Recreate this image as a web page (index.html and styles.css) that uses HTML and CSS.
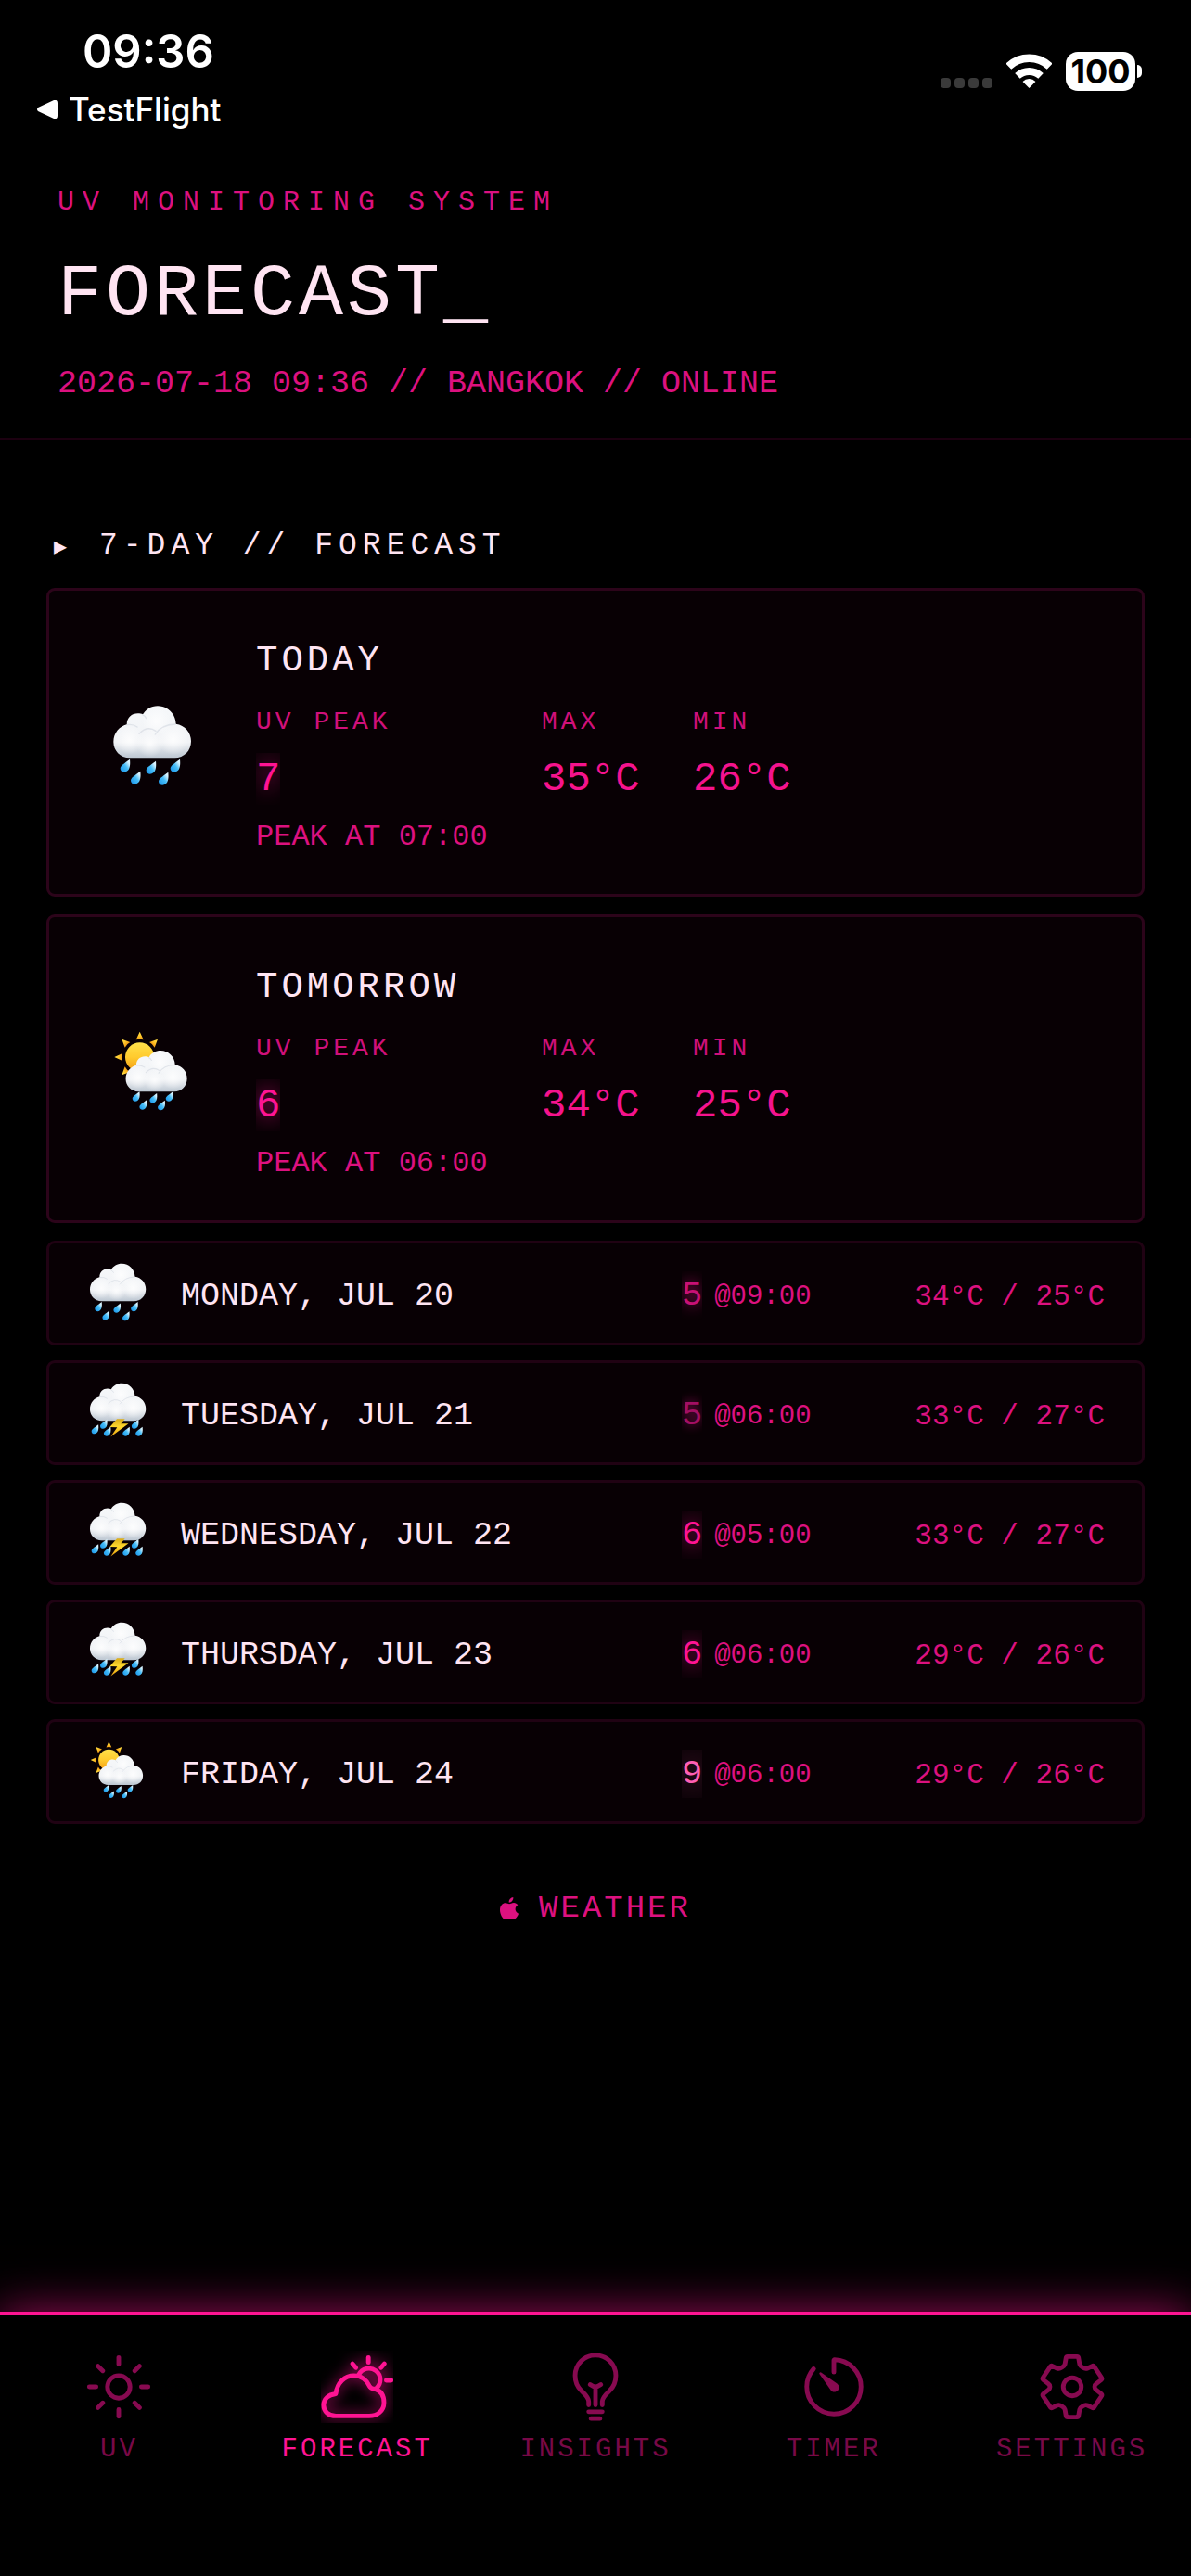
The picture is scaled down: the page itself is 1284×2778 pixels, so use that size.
FILE: index.html
```
<!DOCTYPE html>
<html lang="en">
  <head>
    <meta charset="utf-8" />
    <meta name="viewport" content="width=device-width" />
    <title>UV Forecast</title>
    <link rel="stylesheet" href="styles.css">
  </head>
  <body>
    <!-- shared weather icons -->
    <svg class="sprite" aria-hidden="true">
      <defs>
        <linearGradient id="cloud-fill" x1="0" y1="0" x2="0" y2="1">
          <stop offset="0" stop-color="#f6f8fa" />
          <stop offset="0.7" stop-color="#f1f3f6" />
          <stop offset="1" stop-color="#bcc6d1" />
        </linearGradient>
        <radialGradient id="puff-fill">
          <stop offset="0" stop-color="#fff" stop-opacity="0.8" />
          <stop offset="1" stop-color="#fff" stop-opacity="0" />
        </radialGradient>
        <linearGradient id="drop-fill" x1="1" y1="0" x2="0" y2="1">
          <stop offset="0.2" stop-color="#d9f3ff" />
          <stop offset="0.5" stop-color="#45bdf8" />
          <stop offset="1" stop-color="#1690e8" />
        </linearGradient>
        <linearGradient id="sun-fill" x1="0" y1="0" x2="0" y2="1">
          <stop offset="0" stop-color="#ffe04a" />
          <stop offset="0.5" stop-color="#ffcb2e" />
          <stop offset="1" stop-color="#f39a12" />
        </linearGradient>
        <linearGradient id="bolt-fill" x1="0" y1="0" x2="0" y2="1">
          <stop offset="0" stop-color="#d9ab18" />
          <stop offset="0.45" stop-color="#ffd92e" />
          <stop offset="1" stop-color="#e59a0c" />
        </linearGradient>
        <g id="cloud">
          <path fill="url(#cloud-fill)" d="M150 258C118 258 97 234 97 206C97 178 116 156 140 150C140 128 156 114 176 114C182 114 188 115 192 117C202 100 219 90 240 90C272 90 298 115 299 148C328 152 348 176 348 204C348 236 325 258 295 258Z" />
          <circle fill="url(#puff-fill)" cx="236" cy="140" r="46" />
          <circle fill="url(#puff-fill)" cx="148" cy="200" r="46" />
          <circle fill="url(#puff-fill)" cx="290" cy="198" r="50" />
          <circle fill="url(#puff-fill)" cx="215" cy="212" r="44" />
          <g fill="none" stroke="#cbd2dc" stroke-width="4" stroke-opacity="0.5" stroke-linecap="round">
            <path d="M192 119Q200 122 203 130" />
            <path d="M141 151Q160 148 174 158" />
            <path d="M180 180Q206 152 234 171" />
            <path d="M232 182Q252 150 298 149" />
          </g>
        </g>
        <path id="drop" fill="url(#drop-fill)" d="M18 -28C20 -10 18 4 10 10C2 17 -12 15 -13 3C-13 -8 -2 -12 18 -28Z" />
        <path id="ray" fill="url(#sun-fill)" d="M182 66L194 92Q182 88 170 92Z" />
      </defs>
      <symbol id="rain" viewBox="72 74 300 300">
        <use href="#cloud" />
        <use href="#drop" transform="translate(132 290)" />
        <use href="#drop" transform="translate(166 329)" />
        <use href="#drop" transform="translate(216 296)" />
        <use href="#drop" transform="translate(256 332)" />
        <use href="#drop" transform="translate(294 290)" />
      </symbol>
      <symbol id="sun-rain" viewBox="72 52 300 300">
        <circle fill="url(#sun-fill)" cx="182" cy="148" r="47" />
        <use href="#ray" />
        <use href="#ray" transform="rotate(45 182 148)" />
        <use href="#ray" transform="rotate(-45 182 148)" />
        <use href="#ray" transform="rotate(-90 182 148)" />
        <use href="#ray" transform="rotate(-135 182 148)" />
        <use href="#cloud" transform="translate(60 56) scale(0.79)" />
        <use href="#drop" transform="translate(168 281) scale(0.75)" />
        <use href="#drop" transform="translate(191 308) scale(0.75)" />
        <use href="#drop" transform="translate(224 286) scale(0.75)" />
        <use href="#drop" transform="translate(250 309) scale(0.75)" />
        <use href="#drop" transform="translate(276 281) scale(0.75)" />
      </symbol>
      <symbol id="storm" viewBox="72 74 300 300">
        <use href="#cloud" />
        <use href="#drop" transform="translate(117 303)" />
        <use href="#drop" transform="translate(156 280)" />
        <use href="#drop" transform="translate(172 313)" />
        <use href="#drop" transform="translate(257 313)" />
        <use href="#drop" transform="translate(297 280)" />
        <use href="#drop" transform="translate(315 313)" />
        <path fill="url(#bolt-fill)" d="M218 250L186 286L219 288L190 330L270 271L236 271L254 250Z" />
      </symbol>
    </svg>

    <div class="status-bar">
      <div class="status-left">
        <time class="clock">09:36</time>
        <a class="back-link" href="#">
          <svg class="back-arrow" viewBox="0 0 22 20" aria-hidden="true">
            <path d="M1 8Q-1 10 1 12L18 20Q22 21 22 17V3Q22 -1 18 0Z" />
          </svg>
          TestFlight
        </a>
      </div>
      <div class="status-right">
        <div class="signal"><i></i><i></i><i></i><i></i></div>
        <svg class="wifi" viewBox="0 0 148 111" aria-label="Wi-Fi">
          <path d="M7 41A97 97 0 0 1 141 41" stroke-width="26" />
          <path d="M36 72A55 55 0 0 1 112 72" stroke-width="24" />
          <path class="wifi-dot" d="M74 111L53 90A29 29 0 0 1 95 90Z" />
        </svg>
        <div class="battery"><span class="battery-level">100</span><i class="battery-cap"></i></div>
      </div>
    </div>

    <header class="header">
      <p class="eyebrow">UV MONITORING SYSTEM</p>
      <h1 class="title">FORECAST_</h1>
      <p class="meta">2026-07-18 09:36 // BANGKOK // ONLINE</p>
    </header>

    <main class="content">
      <h2 class="section-title"><span class="marker">▸</span>7-DAY // FORECAST</h2>

      <section class="card">
        <svg class="icon-large" role="img" aria-label="Rain"><use href="#rain" /></svg>
        <div class="card-body">
          <h3 class="card-title">TODAY</h3>
          <div class="stats">
            <span class="label">UV PEAK</span>
            <span class="label">MAX</span>
            <span class="label">MIN</span>
            <span class="value"><b class="uv high">7</b></span>
            <span class="value">35°C</span>
            <span class="value">26°C</span>
          </div>
          <p class="peak">PEAK AT 07:00</p>
        </div>
      </section>

      <section class="card">
        <svg class="icon-large" role="img" aria-label="Sun and rain"><use href="#sun-rain" /></svg>
        <div class="card-body">
          <h3 class="card-title">TOMORROW</h3>
          <div class="stats">
            <span class="label">UV PEAK</span>
            <span class="label">MAX</span>
            <span class="label">MIN</span>
            <span class="value"><b class="uv high">6</b></span>
            <span class="value">34°C</span>
            <span class="value">25°C</span>
          </div>
          <p class="peak">PEAK AT 06:00</p>
        </div>
      </section>

      <ul class="days">
        <li class="day">
          <svg class="icon-small" role="img" aria-label="Rain"><use href="#rain" /></svg>
          <span class="day-name">MONDAY, JUL 20</span>
          <div class="day-data">
            <span class="day-uv"><b class="uv medium">5</b><span class="at">@09:00</span></span>
            <span class="temps">34°C / 25°C</span>
          </div>
        </li>
        <li class="day">
          <svg class="icon-small" role="img" aria-label="Thunderstorm"><use href="#storm" /></svg>
          <span class="day-name">TUESDAY, JUL 21</span>
          <div class="day-data">
            <span class="day-uv"><b class="uv low">5</b><span class="at">@06:00</span></span>
            <span class="temps">33°C / 27°C</span>
          </div>
        </li>
        <li class="day">
          <svg class="icon-small" role="img" aria-label="Thunderstorm"><use href="#storm" /></svg>
          <span class="day-name">WEDNESDAY, JUL 22</span>
          <div class="day-data">
            <span class="day-uv"><b class="uv high">6</b><span class="at">@05:00</span></span>
            <span class="temps">33°C / 27°C</span>
          </div>
        </li>
        <li class="day">
          <svg class="icon-small" role="img" aria-label="Thunderstorm"><use href="#storm" /></svg>
          <span class="day-name">THURSDAY, JUL 23</span>
          <div class="day-data">
            <span class="day-uv"><b class="uv high">6</b><span class="at">@06:00</span></span>
            <span class="temps">29°C / 26°C</span>
          </div>
        </li>
        <li class="day">
          <svg class="icon-small" role="img" aria-label="Sun and rain"><use href="#sun-rain" /></svg>
          <span class="day-name">FRIDAY, JUL 24</span>
          <div class="day-data">
            <span class="day-uv"><b class="uv extreme">9</b><span class="at">@06:00</span></span>
            <span class="temps">29°C / 26°C</span>
          </div>
        </li>
      </ul>

      <a class="attribution" href="#">
        <svg class="apple" viewBox="0 0 60 72" aria-hidden="true">
          <path d="M43 0C44 9 37 17 29 17C28 8 35 1 43 0Z" />
          <path d="M30 22C34 22 38 18 45 18C50 18 55 21 58 25C46 32 48 48 60 53C57 62 50 72 44 72C39 72 37 69 31 69C25 69 22 72 18 72C9 72 0 55 0 41C0 27 9 19 18 19C23 19 27 22 30 22Z" />
        </svg>
        WEATHER
      </a>
    </main>

    <nav class="tabs">
      <a class="tab" href="#">
        <svg class="tab-icon" viewBox="0 0 512 512" aria-hidden="true">
          <path d="M256 48V96M256 416V464M403 109L369 143M143 369L109 403M464 256H416M96 256H48M403 403L369 369M143 143L109 109" />
          <circle cx="256" cy="256" r="80" />
        </svg>
        UV
      </a>
      <a class="tab active" href="#" aria-current="page">
        <svg class="tab-icon" viewBox="0 0 512 512" aria-hidden="true">
          <g class="glow">
            <path d="M341 462H106C54 462 19 430 19 385C19 342 52 312 105 305C115 225 168 177 234 177C286 177 325 208 343 250C350 268 366 270 384 272C425 285 446 322 446 368C446 425 400 462 341 462Z" />
            <path d="M268 170A80 80 0 1 1 392 266" />
            <path d="M336 48V83M223 92L247 120M449 92L425 120M462 210H497" />
          </g>
        </svg>
        FORECAST
      </a>
      <a class="tab" href="#">
        <svg class="tab-icon" viewBox="0 0 512 512" aria-hidden="true">
          <path d="M304 384V360C304 331 335.540 303.570 356 284C384.840 256.430 400 219.390 400 176C400 96 336.270 32 256 32A143.600 143.600 0 0 0 112 176C112 217.840 127.810 257.390 156 284C176.350 303.210 208 330.700 208 360V384" />
          <path d="M224 480H288M208 432H304M256 384V256M294 240S272 256 256 256S218 240 218 240" />
        </svg>
        INSIGHTS
      </a>
      <a class="tab" href="#">
        <svg class="tab-icon" viewBox="0 0 512 512" aria-hidden="true">
          <path d="M112.910 128A191.850 191.850 0 0 0 64 254C62.820 360.350 149.650 447.800 256 448C362.200 448.200 448 362.170 448 256C448 151.460 364.450 66.390 260.500 64A4.360 4.360 0 0 0 256 68.370V152" />
          <path class="needle" d="M233.380 278.630L154.380 165.630A8.130 8.130 0 0 1 165.700 154.310L278.700 233.310A32.500 32.500 0 0 1 241.450 286.570A33.210 33.210 0 0 1 233.380 278.630Z" />
        </svg>
        TIMER
      </a>
      <a class="tab" href="#">
        <svg class="tab-icon" viewBox="0 0 512 512" aria-hidden="true">
          <path d="M222 42H290Q298 42 300 50L308 96Q312 110 330 119Q348 132 364 125L396 109Q405 104 411 112L464 192Q468 200 462 206L426 234Q414 242 414 256Q414 270 426 278L462 306Q468 312 464 320L411 400Q405 408 396 403L364 387Q348 380 330 393Q312 402 308 416L300 462Q298 470 290 470H222Q214 470 212 462L204 416Q200 402 182 393Q164 380 148 387L116 403Q107 408 101 400L48 320Q44 312 50 306L86 278Q98 270 98 256Q98 242 86 234L50 206Q44 200 48 192L101 112Q107 104 116 109L148 125Q164 132 182 119Q200 110 204 96L212 50Q214 42 222 42Z" />
          <circle cx="256" cy="256" r="64" />
        </svg>
        SETTINGS
      </a>
    </nav>
  </body>
</html>
```
FILE: styles.css
```
* {
  box-sizing: border-box;
}

body {
  margin: 0;
  min-height: 100vh;
  display: flex;
  flex-direction: column;
  background-color: #000;
  color: #dc117f;
  font-family: 'Liberation Mono', 'DejaVu Sans Mono', monospace;
}

h1,
h2,
h3,
p,
ul {
  margin: 0;
  padding: 0;
  font-weight: normal;
}

a {
  color: inherit;
  text-decoration: none;
}

.sprite {
  position: absolute;
  width: 0;
  height: 0;
}

/* status bar */
.status-bar {
  display: flex;
  justify-content: space-between;
  min-height: 198px;
  padding: 26px 53px 0 40px;
  color: #fff;
  font-family: Inter, sans-serif;
}

.status-left {
  display: flex;
  flex-direction: column;
  gap: 12px;
}

.clock {
  padding-left: 49px;
  font-size: 49px;
  font-weight: 600;
  line-height: 60px;
}

.back-link {
  display: flex;
  align-items: center;
  gap: 12px;
  font-size: 35px;
  font-weight: 500;
  line-height: 40px;
}

.back-arrow {
  width: 22px;
  height: 20px;
  fill: #fff;
}

.status-right {
  display: flex;
  align-items: center;
  gap: 15px;
  height: 101px;
}

.signal {
  display: flex;
  gap: 4px;
  padding-top: 26px;
}

.signal i {
  width: 11px;
  height: 11px;
  border-radius: 4px;
  background-color: #3a3a3a;
}

.wifi {
  width: 49px;
  height: 37px;
  fill: none;
  stroke: #fff;
}

.wifi-dot {
  fill: #fff;
  stroke: none;
}

.battery {
  display: flex;
  align-items: center;
  gap: 2px;
}

.battery-level {
  width: 75px;
  border-radius: 13px;
  background-color: #fff;
  color: #000;
  font-size: 36px;
  font-weight: 700;
  line-height: 42px;
  text-align: center;
}

.battery-cap {
  width: 5px;
  height: 14px;
  border-radius: 0 5px 5px 0;
  background-color: #fff;
}

/* header */
.header {
  padding: 0 62px 36px;
  border-bottom: 3px solid #1c0010;
}

.eyebrow {
  font-size: 30px;
  line-height: 40px;
  letter-spacing: 9px;
}

.title {
  margin: 28px 0 22px;
  color: #ffe4f2;
  font-size: 80px;
  line-height: 104px;
  letter-spacing: 4px;
}

.meta {
  font-size: 35px;
  line-height: 44px;
}

/* forecast */
.content {
  flex: 1;
  padding: 93px 50px 40px;
}

.section-title {
  display: flex;
  margin-bottom: 24px;
  padding-left: 8px;
  color: #ffe4f2;
  font-size: 33px;
  line-height: 42px;
  letter-spacing: 6px;
}

.marker {
  width: 49px;
  font-family: 'DejaVu Sans', sans-serif;
  font-size: 28px;
}

.card {
  display: flex;
  align-items: center;
  gap: 62px;
  margin-bottom: 19px;
  padding: 52px 61px 42px;
  border: 3px solid #2c041a;
  border-radius: 9px;
  background-color: #080004;
}

.icon-large {
  width: 100px;
  height: 100px;
}

.card-title {
  margin-bottom: 25px;
  color: #ffe4f2;
  font-size: 39px;
  line-height: 48px;
  letter-spacing: 4px;
}

.stats {
  display: grid;
  grid-template-columns: 308px 163px auto;
  row-gap: 16px;
}

.label {
  color: #d0107a;
  font-size: 28px;
  line-height: 34px;
  letter-spacing: 4px;
}

.value {
  color: #f5138d;
  font-size: 44px;
  line-height: 56px;
}

.peak {
  margin-top: 16px;
  font-size: 32px;
  line-height: 38px;
}

/* the glow stays inside the digit's own box */
.uv {
  display: block;
  width: max-content;
  overflow: hidden;
  font-weight: normal;
}

.uv.low {
  color: #a30f64;
  text-shadow: 0 0 12px #a30f64;
}

.uv.medium {
  color: #c81176;
  text-shadow: 0 0 16px #c81176;
}

.uv.high {
  color: #ff1493;
  text-shadow: 0 0 24px #ff1493;
}

.uv.extreme {
  color: #ff5fb4;
  text-shadow: 0 0 36px #ff5fb4;
}

.days {
  display: flex;
  flex-direction: column;
  gap: 16px;
  list-style: none;
}

.day {
  display: grid;
  grid-template-columns: 72px 1fr 456px;
  column-gap: 32px;
  align-items: center;
  min-height: 113px;
  padding: 0 40px 0 38px;
  border: 3px solid #200213;
  border-radius: 9px;
  background-color: #080004;
}

.icon-small {
  width: 72px;
  height: 72px;
}

.day-name {
  padding-top: 6px;
  color: #ffe4f2;
  font-size: 35px;
}

.day-data {
  display: flex;
  justify-content: space-between;
  align-items: baseline;
  padding-top: 4px;
}

.day-uv {
  display: flex;
  align-items: center;
  gap: 13px;
  font-size: 37px;
  line-height: 52px;
}

.at {
  padding-top: 4px;
  font-size: 29px;
}

.temps {
  font-size: 31px;
}

.attribution {
  display: flex;
  justify-content: center;
  align-items: center;
  gap: 22px;
  margin-top: 71px;
  font-size: 34px;
  line-height: 40px;
  letter-spacing: 3px;
}

.apple {
  width: 20px;
  height: 24px;
  fill: #dc117f;
}

/* tab bar */
.tabs {
  display: grid;
  grid-template-columns: repeat(5, 1fr);
  padding: 39px 0 118px;
  border-top: 3px solid #ff1493;
  background-color: #000;
  box-shadow: 0 0 48px rgba(255, 20, 147, 0.6);
}

.tab {
  display: flex;
  flex-direction: column;
  align-items: center;
  gap: 11px;
  color: #780947;
  font-size: 29px;
  line-height: 36px;
  letter-spacing: 3px;
}

.tab.active {
  color: #ff1493;
}

.tab-icon {
  width: 78px;
  height: 78px;
  overflow: hidden;
  fill: none;
  stroke: #870a50;
  stroke-width: 32;
  stroke-linecap: round;
  stroke-linejoin: round;
}

.active .tab-icon {
  stroke: #ff1493;
}

.needle {
  fill: #870a50;
  stroke: none;
}

.glow {
  filter: drop-shadow(0 0 50px rgba(255, 20, 147, 0.8));
}
```
